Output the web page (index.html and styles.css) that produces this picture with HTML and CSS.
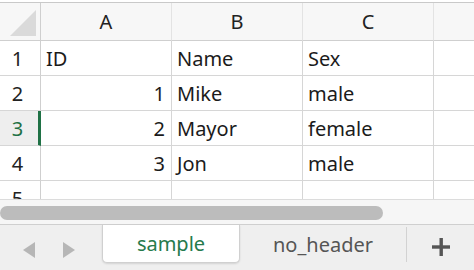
FILE: index.html
```html
<!DOCTYPE html>
<html>
<head>
<meta charset="utf-8">
<link rel="stylesheet" href="styles.css">
</head>
<body>
<div class="app">
  <div class="sheet">
    <div class="grid">
      <div class="corner"><span class="tri"></span></div>
      <div class="colhead">A</div>
      <div class="colhead">B</div>
      <div class="colhead">C</div>
      <div class="colhead last"></div>

      <div class="rowhead">1</div>
      <div class="cell">ID</div>
      <div class="cell">Name</div>
      <div class="cell">Sex</div>
      <div class="cell last"></div>

      <div class="rowhead">2</div>
      <div class="cell num">1</div>
      <div class="cell">Mike</div>
      <div class="cell">male</div>
      <div class="cell last"></div>

      <div class="rowhead sel">3</div>
      <div class="cell num">2</div>
      <div class="cell">Mayor</div>
      <div class="cell">female</div>
      <div class="cell last"></div>

      <div class="rowhead">4</div>
      <div class="cell num">3</div>
      <div class="cell">Jon</div>
      <div class="cell">male</div>
      <div class="cell last"></div>

      <div class="rowhead">5</div>
      <div class="cell"></div>
      <div class="cell"></div>
      <div class="cell"></div>
      <div class="cell last"></div>
    </div>
  </div>
  <div class="hscroll"><div class="thumb"></div></div>
  <div class="tabbar">
    <div class="nav">
      <svg class="arrow" width="12" height="16" viewBox="0 0 12 16"><polygon points="12,0 12,16 0,8" fill="#b6b6b6"/></svg>
      <svg class="arrow" width="12" height="16" viewBox="0 0 12 16"><polygon points="0,0 0,16 12,8" fill="#b6b6b6"/></svg>
    </div>
    <div class="tab active">sample</div>
    <div class="tab">no_header</div>
    <div class="add">
      <svg width="18" height="18" viewBox="0 0 18 18"><rect x="7.5" y="0" width="3.4" height="18" fill="#555"/><rect x="0" y="7.3" width="18" height="3.4" fill="#555"/></svg>
    </div>
  </div>
</div>
</body>
</html>
```
FILE: styles.css
```css
* { box-sizing: border-box; }
html, body { margin: 0; padding: 0; background: #fff; }
body {
  font-family: "Noto Sans", "Liberation Sans", sans-serif;
  color: #1b1b1b;
  width: 474px;
  height: 270px;
  overflow: hidden;
}
.app {
  display: flex;
  flex-direction: column;
  height: 270px;
}
.sheet {
  height: 199px;
  overflow: hidden;
  padding-top: 2px;
  flex: none;
}
.grid {
  display: grid;
  grid-template-columns: 41px 131px 131px 131px 40px;
  grid-template-rows: 38px 35px 35px 35px 35px 35px;
  border-top: 1px solid #c9c9c9;
  font-size: 20px;
}
.corner, .colhead {
  background: #f7f7f7;
  border-right: 1px solid #e3e3e3;
  border-bottom: 1px solid #cfcfcf;
}
.corner {
  position: relative;
  border-right: 1px solid #cfcfcf;
}
.tri {
  position: absolute;
  left: 10px;
  top: 7px;
  width: 26px;
  height: 26px;
  background: #dadada;
  clip-path: polygon(100% 0, 100% 100%, 0 100%);
}
.colhead {
  display: flex;
  align-items: center;
  justify-content: center;
  color: #222;
  padding-bottom: 1px;
}
.rowhead {
  display: flex;
  align-items: center;
  justify-content: center;
  padding-right: 5px;
  background: #fff;
  border-right: 1px solid #cfcfcf;
  border-bottom: 1px solid #d6d6d6;
  color: #222;
}
.rowhead.sel {
  background: #eeeeee;
  color: #1f7145;
  border-right: 3px solid #1f7145;
  padding-right: 3px;
}
.cell {
  display: flex;
  align-items: center;
  padding: 0 5px;
  border-right: 1px solid #d6d6d6;
  border-bottom: 1px solid #d6d6d6;
  white-space: nowrap;
}
.cell.num { justify-content: flex-end; padding-right: 6px; }
.last { border-right: none; }
.hscroll {
  height: 25px;
  flex: none;
  background: #f6f6f6;
  border-top: 1px solid #dcdcdc;
  padding-top: 6px;
}
.thumb {
  width: 383px;
  height: 14px;
  border-radius: 7px;
  background: #bcbcbc;
}
.tabbar {
  flex: 1;
  display: flex;
  align-items: flex-start;
  background: #efefef;
  border-top: 1px solid #cfcfcf;
}
.nav {
  width: 102px;
  height: 45px;
  display: flex;
  align-items: center;
  gap: 28px;
  padding-left: 23px;
  padding-top: 4px;
}
.arrow { display: block; }
.tab {
  height: 38px;
  display: flex;
  align-items: center;
  justify-content: center;
  font-size: 20px;
  color: #555;
}
.tab.active {
  width: 138px;
  background: #fff;
  color: #267a4c;
  border: 1px solid #d0d0d0;
  border-top: none;
  border-radius: 0 0 5px 5px;
  box-shadow: 0 1px 2px rgba(0,0,0,0.12);
}
.tab:not(.active) {
  width: 167px;
  margin-top: 2px;
  height: 35px;
  border-right: 1px solid #d2d2d2;
}
.add {
  flex: 1;
  height: 45px;
  display: flex;
  align-items: center;
  justify-content: center;
  padding-bottom: 1px;
}
.add svg { display: block; }
```
